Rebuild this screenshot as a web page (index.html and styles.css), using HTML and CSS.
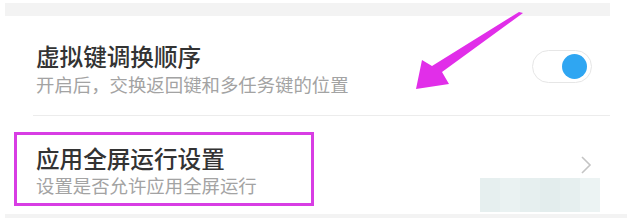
FILE: index.html
```
<!DOCTYPE html>
<html lang="zh">
  <head>
    <meta charset="UTF-8" />
    <title>设置</title>
    <link rel="stylesheet" href="styles.css">
  </head>
  <body>
    <div class="page">
      <div class="band"></div>

      <div class="row row-first">
        <div class="texts">
          <div class="title">虚拟键调换顺序</div>
          <div class="sub">开启后，交换返回键和多任务键的位置</div>
        </div>
        <div class="toggle"><span class="knob"></span></div>
      </div>

      <div class="sep"></div>

      <div class="row row-second">
        <div class="texts highlight">
          <div class="title">应用全屏运行设置</div>
          <div class="sub">设置是否允许应用全屏运行</div>
        </div>
        <svg class="chevron" width="12" height="20" viewBox="0 0 12 20">
          <polyline points="2,2 10,10 2,18" fill="none" stroke="#c4c4c4" stroke-width="1.6" />
        </svg>
      </div>

      <div class="band band-bottom"></div>

      <!-- annotation arrow + mosaic overlay -->
      <svg class="arrow" width="627" height="218" viewBox="0 0 627 218">
        <polygon points="523,13 442,72 449,84 416,89 422,60 432,66 519,12" fill="#e12ee9" />
      </svg>
      <div class="mosaic">
        <span></span><span></span><span></span><span></span><span></span><span></span>
      </div>
    </div>
  </body>
</html>
```

FILE: styles.css
```
body {
  margin: 0;
  background: #fff;
  font-family: "Noto Sans CJK SC", "Noto Sans", sans-serif;
}
.page {
  position: relative;
  width: 627px;
  height: 218px;
  overflow: hidden;
}
.band {
  margin: 3px 17px 0 5px;
  height: 13px;
  background: #f3f3f3;
}
.band-bottom {
  margin: 0 0 0 5px;
  height: 6px;
}
.row {
  display: flex;
  align-items: center;
  justify-content: space-between;
}
.row-first {
  height: 98px;
  padding: 0 35px 0 36px;
  margin-top: 1px;
}
.row-first .texts {
  padding-top: 4px;
}
.row-second {
  height: 98px;
  padding: 0 35px 0 14px;
}
.title {
  font-size: 23.6px;
  line-height: 28px;
  font-weight: 500;
  color: #333;
}
.sub {
  font-size: 18.4px;
  line-height: 22px;
  color: #a3a3a3;
  margin-top: 3px;
}
.highlight {
  width: 275px;
  border: 3px solid #d83de4;
  padding: 9px 0 7px 19px;
  margin-top: 7px;
}
.highlight .sub {
  margin-top: 2px;
}
.sep {
  margin: 0 17px 0 33px;
  height: 1px;
  background: #ececec;
}
.toggle {
  width: 54px;
  height: 31px;
  border: 1.5px solid #e6e6e6;
  border-radius: 17px;
  display: flex;
  align-items: center;
  justify-content: flex-end;
  padding-right: 4px;
}
.knob {
  width: 25px;
  height: 25px;
  border-radius: 50%;
  background: #2fa6f2;
}
.chevron {
  margin-right: 0;
}
.arrow {
  position: absolute;
  left: 0;
  top: 0;
}
.mosaic {
  position: absolute;
  left: 480px;
  top: 178px;
  width: 120px;
  height: 34px;
  display: flex;
}
.mosaic span {
  flex: 1;
  background: #e6efef;
}
.mosaic span:nth-child(2) { background: #eaf2f2; }
.mosaic span:nth-child(4) { background: #e3eded; }
.mosaic span:nth-child(6) { background: #ecf3f3; }
```
